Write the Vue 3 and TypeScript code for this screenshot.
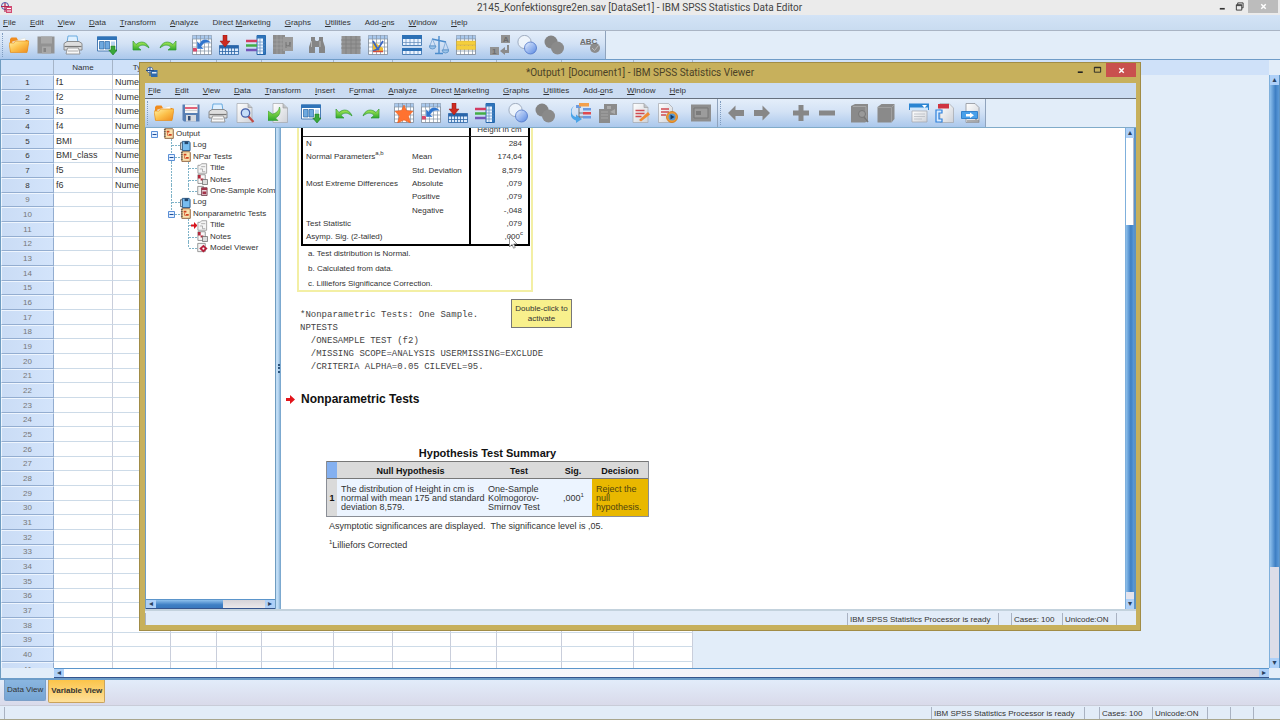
<script setup lang="ts">
interface Menu { text: string; key: number }
interface Glyph { t: string; x: number; y: number }
interface Tool { icon: string; label: string; gap?: 'sep' | 'wide'; off?: boolean; glyphs?: Glyph[] }
interface TreeRow { cells: string[]; icon: string; text: string; current?: boolean }

const menu = (text: string, key = 0): Menu => ({ text, key })

const editorMenus: Menu[] = [
  menu('File'), menu('Edit'), menu('View'), menu('Data'), menu('Transform'), menu('Analyze'),
  menu('Direct Marketing', 7), menu('Graphs'), menu('Utilities'), menu('Add-ons', 4), menu('Window'), menu('Help'),
]
const viewerMenus: Menu[] = [
  menu('File'), menu('Edit'), menu('View'), menu('Data'), menu('Transform'), menu('Insert'), menu('Format', 1),
  menu('Analyze'), menu('Direct Marketing', 7), menu('Graphs'), menu('Utilities'), menu('Add-ons', 4),
  menu('Window'), menu('Help'),
]

const editorTools: Tool[] = [
  { icon: 'open', label: 'Open' },
  { icon: 'save-off', label: 'Save', off: true },
  { icon: 'print', label: 'Print' },
  { icon: 'recall', label: 'Recall dialogs', gap: 'sep' },
  { icon: 'undo', label: 'Undo', gap: 'sep' },
  { icon: 'redo', label: 'Redo' },
  { icon: 'goto-case', label: 'Go to case', gap: 'sep' },
  { icon: 'goto-var', label: 'Go to variable' },
  { icon: 'variables', label: 'Variables' },
  { icon: 'stats-off', label: 'Descriptives', off: true },
  { icon: 'find', label: 'Find', gap: 'sep', off: true },
  { icon: 'grid-off', label: 'Insert case', gap: 'sep', off: true },
  { icon: 'insert-var', label: 'Insert variable' },
  { icon: 'split', label: 'Split file', gap: 'sep' },
  { icon: 'weight', label: 'Weight cases' },
  { icon: 'select', label: 'Select cases' },
  { icon: 'labels-off', label: 'Value labels', gap: 'sep', off: true, glyphs: [{ t: 'A', x: 13, y: 7 }, { t: '1', x: 2, y: 19 }] },
  { icon: 'sets', label: 'Use variable sets' },
  { icon: 'sets-off', label: 'Show all variables', off: true },
  { icon: 'spell', label: 'Spell check', gap: 'wide', off: true, glyphs: [{ t: 'ABC', x: 0, y: 9 }] },
]
const viewerTools: Tool[] = [
  { icon: 'open', label: 'Open' },
  { icon: 'save', label: 'Save' },
  { icon: 'print', label: 'Print' },
  { icon: 'preview', label: 'Print preview' },
  { icon: 'export', label: 'Export', gap: 'sep' },
  { icon: 'recall', label: 'Recall dialogs', gap: 'sep' },
  { icon: 'undo', label: 'Undo', gap: 'sep' },
  { icon: 'redo', label: 'Redo' },
  { icon: 'goto-data', label: 'Go to data', gap: 'sep' },
  { icon: 'goto-case', label: 'Go to case' },
  { icon: 'goto-var', label: 'Go to variable' },
  { icon: 'variables', label: 'Variables' },
  { icon: 'sets', label: 'Use variable sets', gap: 'sep' },
  { icon: 'sets-off', label: 'Show all variables', off: true },
  { icon: 'last-output', label: 'Select last output', gap: 'wide' },
  { icon: 'window-off', label: 'Associate autoscript', off: true },
  { icon: 'script', label: 'Edit script', gap: 'sep' },
  { icon: 'run-script', label: 'Run script' },
  { icon: 'designate-off', label: 'Designate window', gap: 'sep', off: true },
]
const outlineTools: Tool[] = [
  { icon: 'left', label: 'Promote', off: true },
  { icon: 'right', label: 'Demote', off: true },
  { icon: 'plus', label: 'Expand', gap: 'wide', off: true },
  { icon: 'minus', label: 'Collapse', off: true },
  { icon: 'book-open', label: 'Show', gap: 'sep', off: true },
  { icon: 'book', label: 'Hide', off: true },
  { icon: 'heading', label: 'Insert heading', gap: 'sep' },
  { icon: 'title', label: 'Insert title' },
  { icon: 'text', label: 'Insert text' },
]

const variables = ['f1', 'f2', 'f3', 'f4', 'BMI', 'BMI_class', 'f5', 'f6']
const rows = Array.from({ length: 41 }, (_, i) => ({ n: i + 1, name: variables[i] ?? '' }))

const tree: TreeRow[] = [
  { cells: ['box'], icon: 'book-out', text: 'Output' },
  { cells: ['none', 'tee'], icon: 'log', text: 'Log' },
  { cells: ['none', 'boxmid'], icon: 'book-out', text: 'NPar Tests' },
  { cells: ['none', 'line', 'tee'], icon: 'page', text: 'Title' },
  { cells: ['none', 'line', 'tee'], icon: 'notes', text: 'Notes' },
  { cells: ['none', 'line', 'end'], icon: 'pivot', text: 'One-Sample Kolmogorov-Smirnov Test' },
  { cells: ['none', 'tee'], icon: 'log', text: 'Log' },
  { cells: ['none', 'boxend'], icon: 'book-out', text: 'Nonparametric Tests' },
  { cells: ['none', 'none', 'tee'], icon: 'page', text: 'Title', current: true },
  { cells: ['none', 'none', 'tee'], icon: 'notes', text: 'Notes' },
  { cells: ['none', 'none', 'end'], icon: 'model', text: 'Model Viewer' },
]

const pivot = [
  { a: 'N', b: '', v: '284' },
  { a: 'Normal Parameters', sup: 'a,b', b: 'Mean', v: '174,64' },
  { a: '', b: 'Std. Deviation', v: '8,579' },
  { a: 'Most Extreme Differences', b: 'Absolute', v: ',079' },
  { a: '', b: 'Positive', v: ',079' },
  { a: '', b: 'Negative', v: '-,048' },
  { a: 'Test Statistic', b: '', v: ',079' },
  { a: 'Asymp. Sig. (2-tailed)', b: '', v: ',000', vsup: 'c' },
]

const syntax = [
  '*Nonparametric Tests: One Sample.',
  'NPTESTS',
  '  /ONESAMPLE TEST (f2)',
  '  /MISSING SCOPE=ANALYSIS USERMISSING=EXCLUDE',
  '  /CRITERIA ALPHA=0.05 CILEVEL=95.',
]
</script>

<template>
  <div class="desktop">
    <svg class="defs" aria-hidden="true">
      <defs>
        <linearGradient id="g-fold" x1="0" y1="0" x2="1" y2="1">
          <stop offset="0" stop-color="#fff3a8" /><stop offset=".5" stop-color="#fcc04a" /><stop offset="1" stop-color="#ee8a1c" />
        </linearGradient>
        <linearGradient id="g-page" x1="0" y1="0" x2="1" y2="1">
          <stop offset="0" stop-color="#fff" /><stop offset="1" stop-color="#cfd2d8" />
        </linearGradient>
        <linearGradient id="g-blue" x1="0" y1="0" x2="1" y2="1">
          <stop offset="0" stop-color="#e4eeff" /><stop offset="1" stop-color="#4d80e0" />
        </linearGradient>
        <linearGradient id="g-green" x1="0" y1="0" x2="0" y2="1">
          <stop offset="0" stop-color="#b6f05a" /><stop offset="1" stop-color="#2ea82c" />
        </linearGradient>
      </defs>
      <symbol id="i-open" viewBox="0 0 20 20">
        <path d="M1 17V4l1.500-1.500h5L9 5h9.500v11z" fill="#f08c1e" />
        <path d="M3 7l13-4 1 6-12 4z" fill="#fff" stroke="#ddc" stroke-width=".5" />
        <path d="M0 8h5l1.500-2H20l-2 11.500H1.500z" fill="url(#g-fold)" stroke="#e78f1d" stroke-width=".7" />
      </symbol>
      <symbol id="i-save-off" viewBox="0 0 20 20">
        <path d="M1.500 1.500h17v17h-17z" fill="#929292" /><path d="M5 1.500h11v7H5zM6 11.500h9v7H6z" fill="#a8a8a8" /><path d="M7.500 13h2.500v4H7.500z" fill="#858585" />
      </symbol>
      <symbol id="i-save" viewBox="0 0 20 20">
        <path d="M1.500 1.500h17v17H3l-1.500-1.500z" fill="#587fb3" /><path d="M4 1.500h12.500v8.500H4z" fill="#f5f5f5" />
        <path d="M4 4h12.500v2H4z" fill="#e2637a" /><path d="M4 7.500h12.500" stroke="#bbb" stroke-width=".6" />
        <path d="M5 12h10v6.500H5z" fill="#d5d9df" /><path d="M7 13h2.500v4.500H7z" fill="#344d73" />
      </symbol>
      <symbol id="i-print" viewBox="0 0 20 20">
        <path d="M5 1h9l1 7H4z" fill="#dff0ff" stroke="#4d9ad8" stroke-width=".8" />
        <path d="M1 8.500l3-2h12l3 2v6.500H1z" fill="#dedede" stroke="#777" stroke-width=".8" />
        <path d="M1.500 11.500h17" stroke="#777" stroke-width="1.200" />
        <path d="M4.500 13h11l1.500 6H3z" fill="#f8f8f8" stroke="#888" stroke-width=".8" /><path d="M5 16h10" stroke="#999" stroke-width=".8" />
      </symbol>
      <symbol id="i-recall" viewBox="0 0 20 20">
        <path d="M.5 2h19v14H.5z" fill="#fff" stroke="#4a7cb4" /><path d="M0 1.500h20V5H0z" fill="#2f73b8" />
        <path d="M2.500 6.500H7V14H2.500zM8 6.500h4.500V14H8z" fill="#6ea9df" stroke="#2865a5" stroke-width=".7" /><path d="M14 6.500h4v4h-4z" fill="#b8d5f0" />
        <path d="M14 11h4v4h2.200L16 20l-4.200-5H14z" fill="#3aa83a" stroke="#1d7a22" stroke-width=".6" />
      </symbol>
      <symbol id="i-undo" viewBox="0 0 20 20">
        <path d="M2 6v9h8l-3-2.500c3-3.500 7-3 11 .5C16 7 10 5 5 9.500z" fill="url(#g-green)" stroke="#2f9a35" stroke-width=".7" />
      </symbol>
      <symbol id="i-redo" viewBox="0 0 20 20">
        <path d="M18 6v9h-8l3-2.500c-3-3.500-7-3-11 .5C4 7 10 5 15 9.500z" fill="url(#g-green)" stroke="#2f9a35" stroke-width=".7" />
      </symbol>
      <symbol id="i-sheet" viewBox="0 0 20 20">
        <path d="M.5 .5h19v19H.5z" fill="#fff" stroke="#7d8896" stroke-width=".8" /><path d="M.5 .5h19V4H.5z" fill="#a9c8ec" />
        <path d="M0 4h20M0 8h20M0 12h20M0 16h20M4.500 0v20M8.500 0v20M12.500 0v20M16.500 0v20" stroke="#8392a5" stroke-width=".7" />
      </symbol>
      <symbol id="i-goto-case" viewBox="0 0 20 20">
        <use href="#i-sheet" width="20" height="20" /><path d="M1 13h4v3.500H1z" fill="#d9486a" />
        <path d="M5 6v8h7l-2.500-2.300C11 8 14 7 19 8 16 3 10 3 7.500 8.500z" fill="#2f74cc" stroke="#fff" stroke-width=".4" />
      </symbol>
      <symbol id="i-goto-data" viewBox="0 0 20 20">
        <use href="#i-sheet" width="20" height="20" />
        <path d="M10 2l2.500 5.500 6.500.8-4.500 4.700 2 7L10 17l-6.500 3 2-7L1 8.300l6.500-.8z" fill="#ff7230" stroke="#e05a1c" stroke-width=".5" />
      </symbol>
      <symbol id="i-goto-var" viewBox="0 0 20 20">
        <path d="M.5 10.500h19v9H.5z" fill="#dceafb" stroke="#2c66a6" stroke-width=".8" /><path d="M.5 10.500h19v3H.5z" fill="#2865aa" />
        <path d="M0 16.500h20M3.500 13v6.500M6.500 13v6.500M9.500 13v6.500M12.500 13v6.500M15.500 13v6.500" stroke="#2c66a6" stroke-width=".8" />
        <path d="M4 0h4v6h3L6 12 1 6h3z" fill="#cd2b20" stroke="#8d1310" stroke-width=".5" />
      </symbol>
      <symbol id="i-variables" viewBox="0 0 20 20">
        <path d="M11 .5h8.500v19H11z" fill="#eaf3ff" stroke="#2464a8" /><path d="M11 .5h8.500v3H11zM17 1h2.500v18H17z" fill="#2f74ba" />
        <path d="M11 7h8M11 10h8M11 13h8M11 16h8M14 3v16" stroke="#5d8dbe" stroke-width=".7" />
        <path d="M0 6h11" stroke="#d23c62" stroke-width="2.500" /><path d="M0 10.500h11" stroke="#43ad47" stroke-width="2.500" /><path d="M0 15h11" stroke="#7356b8" stroke-width="2.500" />
      </symbol>
      <symbol id="i-stats-off" viewBox="0 0 20 20">
        <path d="M0 0h12v19H0z" fill="#8c8c8c" /><path d="M0 5h12M0 9h12M0 13h12M4 0v19M8 0v19" stroke="#aaa" stroke-width=".6" />
        <path d="M10 2h10v14H10z" fill="#9b9b9b" /><path d="M13 13V7M13 10q4 3 4-3v5" stroke="#747474" fill="none" />
      </symbol>
      <symbol id="i-find" viewBox="0 0 20 20">
        <path d="M4 2h4v3l1 1h2l1-1V2h4v4l2 6v6h-6v-6H8v6H2v-6l2-6z" fill="#858585" /><path d="M4.500 6v6M13 6v6" stroke="#b5b5b5" />
      </symbol>
      <symbol id="i-grid-off" viewBox="0 0 20 20">
        <path d="M.5 1h19v18H.5z" fill="#949494" /><path d="M0 5h20M0 9h20M0 13h20M5 1v18M10 1v18M15 1v18" stroke="#7e7e7e" stroke-width=".8" />
      </symbol>
      <symbol id="i-insert-var" viewBox="0 0 20 20">
        <use href="#i-sheet" width="20" height="20" /><path d="M5 8v9h10v-4l-9-6z" fill="#edbd35" />
        <path d="M5 6l4 7 2 2M15 6l-5 8-5 2" stroke="#3a66c4" stroke-width="1.800" fill="none" /><path d="M5 16.500h10" stroke="#d44b3a" stroke-width="1.500" />
      </symbol>
      <symbol id="i-split" viewBox="0 0 20 20">
        <path d="M.5 .5h19v10H.5zM.5 13.500h19v6H.5z" fill="#eaf3ff" stroke="#2c68a8" stroke-width=".8" /><path d="M0 0h20v4H0zM0 13h20v3H0z" fill="#2c70b5" />
        <path d="M0 7.500h20M4 4v6.500M8 4v6.500M12 4v6.500M16 4v6.500M4 16v4M8 16v4M12 16v4M16 16v4" stroke="#5d87b7" stroke-width=".7" />
      </symbol>
      <symbol id="i-weight" viewBox="0 0 20 20">
        <path d="M10 1v17M3 4l14 3M6 18.500h8" stroke="#4b8ccc" stroke-width="1.400" fill="none" />
        <path d="M3.500 4L.8 11h5.600zM16.500 7L14 15h5.500z" fill="none" stroke="#6a9bd0" stroke-width=".7" />
        <path d="M0 11h7q-.5 3-3.500 3T0 11zM13 15h7q-.5 3-3.500 3T13 15z" fill="#9cc4ea" stroke="#4c86bf" stroke-width=".7" />
      </symbol>
      <symbol id="i-select" viewBox="0 0 20 20">
        <use href="#i-sheet" width="20" height="20" /><path d="M.5 6h19v4H.5zM.5 10.500h19v4H.5z" fill="#f5cf3c" stroke="#d5aa2c" stroke-width=".5" />
      </symbol>
      <symbol id="i-labels-off" viewBox="0 0 20 20">
        <path d="M11 0h9v8h-9zM0 12h9v8H0z" fill="#929292" /><path d="M10 16l5-4v3h2v-5h2v8h-4v2z" fill="#8b8b8b" />
      </symbol>
      <symbol id="i-sets" viewBox="0 0 20 20">
        <circle cx="7.500" cy="7" r="6.600" fill="#f3f7fd" fill-opacity=".8" stroke="#8f9db2" stroke-width=".8" />
        <circle cx="13.500" cy="13" r="6" fill="url(#g-blue)" fill-opacity=".9" stroke="#4d74c8" stroke-width=".8" />
      </symbol>
      <symbol id="i-sets-off" viewBox="0 0 20 20"><circle cx="7" cy="7" r="6.500" fill="#848484" /><circle cx="13.500" cy="13" r="6.500" fill="#8a8a8a" /></symbol>
      <symbol id="i-spell" viewBox="0 0 20 20">
        <path d="M0 9.500h18" stroke="#999" /><circle cx="15" cy="13" r="5" fill="#8c8c8c" /><path d="M12 13l2.500 2.500 4-5" stroke="#bbb" fill="none" />
      </symbol>
      <symbol id="i-doc" viewBox="0 0 20 20"><path d="M2 .5h11l4 4v15H2z" fill="url(#g-page)" stroke="#a3a6ac" stroke-width=".7" /><path d="M13 .5v4h4" fill="#bfc3c8" stroke="#999" stroke-width=".6" /></symbol>
      <symbol id="i-preview" viewBox="0 0 20 20">
        <use href="#i-doc" width="20" height="20" /><path d="M13 13l5.500 6" stroke="#c04b45" stroke-width="2.200" /><circle cx="10.500" cy="10" r="4.200" fill="#c5ddf8" stroke="#465fa8" stroke-width="1.300" />
      </symbol>
      <symbol id="i-export" viewBox="0 0 20 20">
        <path d="M5 .5h10l4.500 4.500v14.500H5z" fill="url(#g-page)" stroke="#a3a6ac" stroke-width=".7" /><path d="M15 .5V5h4.500" fill="#bfc3c8" stroke="#999" stroke-width=".6" />
        <path d="M0 8v9.500h10L7.500 15c4-2 5.500-6 4-11-.5 4-3.500 6.500-7 7z" fill="url(#g-green)" stroke="#35983a" stroke-width=".6" />
      </symbol>
      <symbol id="i-last-output" viewBox="0 0 20 20">
        <path d="M5 2h5v3H5zM12 5h8v2.500h-8zM12 13h8v2.500h-8z" fill="#6b9be0" /><path d="M8 0h10v3.500H8z" fill="#f3a04c" /><path d="M12 9h8v2.500h-8z" fill="#e0494f" />
        <path d="M3 3C-1 7 0 13 5 14v-2.500l6 4.500-6 4v-2.500C-2 16-2 6 3 3z" fill="#4ba4e8" /><path d="M8 5v9h4M8 10h4" stroke="#555" stroke-width=".8" fill="none" />
      </symbol>
      <symbol id="i-window-off" viewBox="0 0 20 20">
        <path d="M6 1h13v11H6zM1 6h11v14H1z" fill="#8b8b8b" /><path d="M3 9h7M3 12h7M3 15h7" stroke="#a6a6a6" /><path d="M9 3h4v3H9zM12 9l5-3v5z" fill="#aaa" />
      </symbol>
      <symbol id="i-script" viewBox="0 0 20 20">
        <use href="#i-doc" width="20" height="20" /><path d="M4.500 7.500h9M4.500 10.500h9M4.500 13.500h6" stroke="#d14b50" stroke-width="1.400" /><path d="M8 17l9-8 2 2.500-9 7z" fill="#f08a32" />
      </symbol>
      <symbol id="i-run-script" viewBox="0 0 20 20">
        <path d="M.5 .5h10l4 4v15H.5z" fill="url(#g-page)" stroke="#a3a6ac" stroke-width=".7" /><path d="M3 6h8M3 9h8M3 12h5" stroke="#d14b50" stroke-width="1.300" /><circle cx="14" cy="14" r="5.500" fill="#f29a30" stroke="#c87518" stroke-width=".8" /><circle cx="14" cy="14" r="3.500" fill="#5797cf" /><path d="M12.500 11.500l4 2.500-4 2.500z" fill="#143b66" />
      </symbol>
      <symbol id="i-designate-off" viewBox="0 0 20 20">
        <path d="M0 1.500h20v17H0z" fill="#8e8e8e" /><path d="M3 5h14v10H3z" fill="#9c9c9c" stroke="#777" /><path d="M5 8h5v4H5z" fill="#7b7b7b" />
      </symbol>
      <symbol id="i-left" viewBox="0 0 20 20"><path d="M2 10l7.500-7.500V7H18v6H9.500v4.500z" fill="#878787" /></symbol>
      <symbol id="i-right" viewBox="0 0 20 20"><path d="M18 10l-7.500-7.500V7H2v6h8.500v4.500z" fill="#878787" /></symbol>
      <symbol id="i-plus" viewBox="0 0 20 20"><path d="M7.500 2h5v5.500H18v5h-5.500V18h-5v-5.500H2v-5h5.500z" fill="#878787" /></symbol>
      <symbol id="i-minus" viewBox="0 0 20 20"><path d="M2 7.500h16v5H2z" fill="#878787" /></symbol>
      <symbol id="i-book-open" viewBox="0 0 20 20">
        <path d="M1 3l4-2h13v17l-3 1.500H1z" fill="#8a8a8a" /><path d="M3 3.500h13v14" stroke="#a6a6a6" fill="none" /><circle cx="12" cy="11" r="3.500" fill="#999" stroke="#777" /><path d="M14 14l4 5" stroke="#777" stroke-width="1.500" />
      </symbol>
      <symbol id="i-book" viewBox="0 0 20 20"><path d="M1.500 4l4-3h13v15l-3 3.500h-14z" fill="#8a8a8a" /><path d="M2 4.500h13.500L18 2M15.500 5v14" stroke="#a6a6a6" stroke-width=".8" fill="none" /></symbol>
      <symbol id="i-heading" viewBox="0 0 20 20">
        <path d="M3 8h15v11H3z" fill="url(#g-page)" stroke="#a0a5ad" stroke-width=".7" /><path d="M5 11h11M5 13.500h11M5 16h8" stroke="#b7bbc2" stroke-width=".8" />
        <path d="M0 .5h20V7H0z" fill="#2a85d2" /><path d="M1 4.500h18V7H1z" fill="#cfe7fb" /><path d="M13 2h5l-2.500 3z" fill="#fff" />
      </symbol>
      <symbol id="i-title" viewBox="0 0 20 20">
        <path d="M5 .5h9l4.500 4.500v14.500H5z" fill="url(#g-page)" stroke="#a3a6ac" stroke-width=".7" /><path d="M3 1h11v4.500H3z" fill="#cf3441" /><path d="M1 7h6v3H4v6h3v3H1z" fill="#d8ebff" stroke="#2d80dc" stroke-width="1.200" />
      </symbol>
      <symbol id="i-text" viewBox="0 0 20 20">
        <path d="M5 .5h9l4 4v15H5z" fill="url(#g-page)" stroke="#8f939a" stroke-width=".8" /><path d="M6 18h12M15 9v8" stroke="#777" />
        <path d="M.5 8.500h16v7H.5z" fill="#48a0ea" stroke="#1d72c4" stroke-width=".8" /><path d="M5 11h4V9.500l4 2.700-4 2.800v-1.500H5z" fill="#fff" />
      </symbol>
      <symbol id="i-app" viewBox="0 0 12 12">
        <circle cx="4" cy="4" r="3.500" fill="none" stroke="#4a4fa5" /><path d="M5 4h6v7H5z" fill="#d14a72" /><path d="M0 4.500h8M4 1v9" stroke="#b5224e" stroke-width="1.200" /><path d="M6 6h4v1H6zM6 8.500h4v1H6z" fill="#fff" />
      </symbol>
      <symbol id="i-app2" viewBox="0 0 12 12">
        <circle cx="4" cy="4" r="3" fill="#dfeaf5" stroke="#6a7f9b" /><path d="M5 4h6.500v7H5z" fill="#2f69ac" /><path d="M0 4.500h8M4 1v9" stroke="#234d88" /><path d="M6 6h4.500v1.500H6z" fill="#dfeaf8" />
      </symbol>
      <symbol id="i-book-out" viewBox="0 0 12 12">
        <path d="M2 .8h8.500l.7 1v9.500H2z" fill="#fbe3b0" stroke="#7d4a22" stroke-width=".9" /><path d="M1 1.500h2M1 4h2M1 6.500h2M1 9h2" stroke="#444" stroke-width=".9" /><path d="M4 3h3v2H4zM6.500 6.500h3v2h-3z" fill="#cf4320" /><path d="M5 5v3h1.500" stroke="#cf4320" fill="none" stroke-width=".8" />
      </symbol>
      <symbol id="i-log" viewBox="0 0 12 12">
        <path d="M.5 3h2.500v7.500H.5z" fill="#eee" stroke="#444" stroke-width=".8" /><path d="M2.500 1.500H10l1 1.500v8.500H2.500z" fill="#78bdf0" stroke="#1a4674" stroke-width=".9" /><path d="M5 1.500h4v3H5z" fill="#24466c" />
      </symbol>
      <symbol id="i-page" viewBox="0 0 12 12">
        <path d="M1 2.500h2.500L5 .8h5.500v10.400H1z" fill="#f4f4f4" stroke="#888" stroke-width=".8" /><path d="M4.500 4h4.500M3 6.500h3M6 6.500v3h3" stroke="#999" stroke-width=".8" fill="none" />
      </symbol>
      <symbol id="i-notes" viewBox="0 0 12 12">
        <path d="M1 .8h8v9.500H1z" fill="#f8f8f8" stroke="#777" stroke-width=".8" /><path d="M1 1h3v4H1zM4 5h3v2H4z" fill="#b4283a" /><path d="M6 6h5.500v5.500H6z" fill="#ddd" stroke="#666" stroke-width=".8" />
      </symbol>
      <symbol id="i-pivot" viewBox="0 0 12 12">
        <path d="M.8 1.500H7v9H.8z" fill="#f4f4f4" stroke="#777" stroke-width=".8" /><path d="M5 3h6v8.500H5z" fill="#e8d9dc" stroke="#5c2233" stroke-width=".8" /><path d="M5 3h6v2.500H5zM6 7h4v3H6z" fill="#a33349" />
      </symbol>
      <symbol id="i-model" viewBox="0 0 12 12">
        <path d="M.8 1.500H9v9H.8z" fill="#f4f4f4" stroke="#777" stroke-width=".8" /><path d="M7 3l4.500 4.200L7 11.500 2.500 7.200z" fill="#b51f3a" /><circle cx="7" cy="7.200" r="1.200" fill="#fff" />
      </symbol>
    </svg>

    <header class="titlebar">
      <svg class="app-icon"><use href="#i-app" /></svg>
      <h1 class="caption">2145_Konfektionsgre2en.sav [DataSet1] - IBM SPSS Statistics Data Editor</h1>
      <div class="controls">
        <button aria-label="Minimize"><svg viewBox="0 0 10 10"><path d="M2 7.500h5.500" stroke="#333" stroke-width="1.800" /></svg></button>
        <button aria-label="Restore"><svg viewBox="0 0 10 10"><path d="M3 3V1h6v5.500H7.500M1.500 3h6v6h-6zM1.500 4h6" fill="none" stroke="#333" /></svg></button>
        <button class="close idle" aria-label="Close"><svg viewBox="0 0 10 10"><path d="M2.500 2.500l5 5m0-5l-5 5" stroke="#fff" stroke-width="1.600" /></svg></button>
      </div>
    </header>
    <nav class="menubar editor-menu">
      <button v-for="m in editorMenus" :key="m.text">{{ m.text.slice(0, m.key) }}<u>{{ m.text[m.key] }}</u>{{ m.text.slice(m.key + 1) }}</button>
    </nav>
    <div class="toolrow">
      <div class="toolbar main-tools" role="toolbar">
        <button v-for="t in editorTools" :key="t.label" :class="t.gap" :aria-label="t.label" :disabled="t.off">
          <svg class="icon" viewBox="0 0 20 20">
            <use :href="'#i-' + t.icon" width="20" height="20" />
            <text v-for="g in t.glyphs" :key="g.t" :x="g.x" :y="g.y">{{ g.t }}</text>
          </svg>
        </button>
      </div>
    </div>

    <main class="sheet">
      <div class="sheet-body">
        <div class="grid-clip">
          <table class="grid">
            <colgroup>
              <col class="c-num"><col class="c-59"><col class="c-58"><col class="c-46"><col class="c-45"><col class="c-72"><col class="c-59">
              <col class="c-58"><col class="c-46"><col class="c-65"><col class="c-72"><col class="c-59">
            </colgroup>
            <thead>
              <tr><th></th><th scope="col">Name</th><th scope="col">Type</th><th v-for="i in 9" :key="i"></th></tr>
            </thead>
            <tbody>
              <tr v-for="r in rows" :key="r.n">
                <th scope="row" :class="{ used: r.name }">{{ r.n }}</th>
                <td>{{ r.name }}</td>
                <td>{{ r.name ? 'Numeric' : '' }}</td>
                <td v-for="i in 9" :key="i"></td>
              </tr>
            </tbody>
          </table>
        </div>
        <div class="vscroll outer-v">
          <button aria-label="Scroll up">▴</button><i class="thumb"></i><i class="track"></i><button aria-label="Scroll down">▾</button>
        </div>
      </div>
      <div class="hscroll outer-h">
        <button aria-label="Scroll left">◂</button><i class="track"></i><button aria-label="Scroll right">▸</button>
      </div>
    </main>
    <div class="tabs" role="tablist">
      <button class="tab" role="tab">Data View</button>
      <button class="tab active" role="tab" aria-selected="true">Variable View</button>
    </div>
    <footer class="status editor-status">
      <span class="fill"></span><span class="msg">IBM SPSS Statistics Processor is ready</span><span class="gapcell"></span>
      <span class="cases">Cases: 100</span><span class="uni">Unicode:ON</span><span class="small"></span><span class="small"></span><span class="small"></span>
    </footer>

    <section class="viewer">
      <header class="viewer-title">
        <svg class="app-icon"><use href="#i-app2" /></svg>
        <h2 class="caption">*Output1 [Document1] - IBM SPSS Statistics Viewer</h2>
        <div class="controls">
          <button aria-label="Minimize"><svg viewBox="0 0 10 10"><path d="M2 8h5.500" stroke="#222" stroke-width="1.800" /></svg></button>
          <button aria-label="Maximize"><svg viewBox="0 0 10 10"><path d="M1.500 2.500h7v5.500h-7zM1.500 3h7" fill="none" stroke="#222" /></svg></button>
          <button class="close" aria-label="Close"><svg viewBox="0 0 10 10"><path d="M2.500 2.500l5 5m0-5l-5 5" stroke="#fff" stroke-width="1.600" /></svg></button>
        </div>
      </header>
      <nav class="menubar viewer-menu">
        <button v-for="m in viewerMenus" :key="m.text">{{ m.text.slice(0, m.key) }}<u>{{ m.text[m.key] }}</u>{{ m.text.slice(m.key + 1) }}</button>
      </nav>
      <div class="toolrow viewer-toolrow">
        <div class="toolbar view-tools" role="toolbar">
          <button v-for="t in viewerTools" :key="t.label" :class="t.gap" :aria-label="t.label" :disabled="t.off">
            <svg class="icon"><use :href="'#i-' + t.icon" /></svg>
          </button>
        </div>
        <div class="toolbar outline-tools" role="toolbar">
          <button v-for="t in outlineTools" :key="t.label" :class="t.gap" :aria-label="t.label" :disabled="t.off">
            <svg class="icon"><use :href="'#i-' + t.icon" /></svg>
          </button>
        </div>
      </div>

      <div class="panes">
        <aside class="outline">
          <ul class="tree">
            <li v-for="(r, i) in tree" :key="i">
              <svg v-for="(c, j) in r.cells" :key="j" class="cell" viewBox="0 0 17 12">
                <path v-if="c === 'line' || c === 'tee' || c === 'boxmid'" d="M8.500 0v12" class="dash" />
                <path v-if="c === 'end' || c === 'boxend'" d="M8.500 0v6" class="dash" />
                <path v-if="c !== 'none' && c !== 'line' && c !== 'box'" d="M9 6.500h8" class="dash" />
                <g v-if="c.startsWith('box')">
                  <path d="M5.500 3.500h6v6h-6z" fill="#e3efff" stroke="#5a8fd6" /><path d="M6.500 6.500h4" stroke="#1d4f9c" />
                </g>
                <path v-if="r.current && j === 2" d="M11 5.500h3V3l3.500 3.500L14 10V7.500h-3z" fill="#d8141c" />
              </svg>
              <svg class="node"><use :href="'#i-' + r.icon" /></svg>
              <span>{{ r.text }}</span>
            </li>
          </ul>
          <div class="hscroll tree-h">
            <button aria-label="Scroll left">◂</button><i class="thumb"></i><i class="track"></i><button aria-label="Scroll right">▸</button>
          </div>
        </aside>
        <div class="splitter"><i></i></div>
        <div class="document">
          <article class="content">
            <div class="pivot-box">
              <table class="pivot">
                <colgroup><col class="p-col-a"><col class="p-col-b"><col class="p-col-v"></colgroup>
                <thead><tr><th colspan="2"></th><th>Height in cm</th></tr></thead>
                <tbody>
                  <tr v-for="(p, i) in pivot" :key="i">
                    <td class="p-a">{{ p.a }}<sup v-if="p.sup">{{ p.sup }}</sup></td>
                    <td>{{ p.b }}</td>
                    <td class="p-v">{{ p.v }}<sup v-if="p.vsup">{{ p.vsup }}</sup>
                      <svg v-if="p.vsup" class="cursor" viewBox="0 0 9 13"><path d="M.5 .5v10.500l2.500-2.500 1.600 3.700 1.700-.8L4.700 8h3.300z" fill="#fff" stroke="#777" stroke-width=".8" /></svg>
                    </td>
                  </tr>
                </tbody>
              </table>
              <p>a. Test distribution is Normal.</p>
              <p>b. Calculated from data.</p>
              <p>c. Lilliefors Significance Correction.</p>
            </div>
            <div class="syntax">
              <pre v-for="line in syntax" :key="line">{{ line }}</pre>
            </div>
            <h3 class="section">
              <svg viewBox="0 0 9 9"><path d="M0 3h4V0l5 4.500L4 9V6H0z" fill="#e2141b" /></svg>Nonparametric Tests
            </h3>
            <div class="summary">
              <table>
                <caption>Hypothesis Test Summary</caption>
                <colgroup><col class="h-n"><col class="h-null"><col class="h-test"><col class="h-sig"><col class="h-dec"></colgroup>
                <thead>
                  <tr><th class="corner"></th><th>Null Hypothesis</th><th>Test</th><th>Sig.</th><th>Decision</th></tr>
                </thead>
                <tbody>
                  <tr>
                    <th scope="row">1</th>
                    <td>The distribution of Height in cm is<br>normal with mean 175 and standard<br>deviation 8,579.</td>
                    <td>One-Sample<br>Kolmogorov-<br>Smirnov Test</td>
                    <td class="sig">,000<sup>1</sup></td>
                    <td class="reject">Reject the<br>null<br>hypothesis.</td>
                  </tr>
                </tbody>
              </table>
              <p>Asymptotic significances are displayed.&nbsp; The significance level is ,05.</p>
              <p><sup>1</sup>Lilliefors Corrected</p>
            </div>
            <div class="tooltip" role="tooltip">Double-click to<br>activate</div>
          </article>
          <div class="vscroll inner-v">
            <button aria-label="Scroll up">▴</button><i class="track"></i><i class="thumb"></i><i class="rest"></i><button aria-label="Scroll down">▾</button>
          </div>
        </div>
      </div>
      <footer class="status viewer-status">
        <span class="fill"></span><span class="msg">IBM SPSS Statistics Processor is ready</span><span class="gapcell"></span>
        <span class="cases">Cases: 100</span><span class="uni">Unicode:ON</span><span class="small"></span>
      </footer>
    </section>
  </div>
</template>

<style>
html, body { margin: 0; background: #e2edf9; }
</style>

<style scoped>
.desktop {
  position: relative; display: flex; flex-direction: column; height: 100vh; overflow: hidden;
  font: 8px/10px "Liberation Sans", Arial, sans-serif; color: #333; background: #e2edf9;
}
.desktop *, .desktop *::before { box-sizing: border-box; }
.defs { position: absolute; width: 0; height: 0; }
button { margin: 0; padding: 0; border: 0; background: none; font: inherit; color: inherit; }
h1, h2, h3, p, ul, pre { margin: 0; padding: 0; font-weight: 400; }
table { border-collapse: separate; border-spacing: 0; table-layout: fixed; }
th, td { padding: 0; text-align: left; }
sup { font-size: 6px; line-height: 0; vertical-align: 4px; }

.titlebar { display: flex; flex: none; height: 15px; background: #ebebeb; }
.app-icon { width: 12px; height: 12px; margin: 2px 0 0 1px; flex: none; }
.caption { flex: 1; text-align: center; font: 10px/16px Roboto, "Noto Sans", sans-serif; color: #444; white-space: nowrap; }
.controls { display: flex; flex: none; }
.controls button { width: 17px; height: 13px; display: grid; place-items: center; }
.controls svg { width: 9px; height: 9px; }
.controls .close { width: 30px; background: #c9504e; }
.controls .idle { background: #bcbcbc; margin-right: 2px; }
.titlebar .caption { padding-left: 52px; }

.menubar { display: flex; flex: none; gap: 14px; height: 16px; padding: 0 3px; align-items: center; background: linear-gradient(#d3e3f6, #c9dcf0); border-bottom: 1px solid #a9b4c4; }
.menubar u { text-underline-offset: 1px; }
.editor-menu { padding-top: 1px; }

.toolrow { display: flex; flex: none; height: 29px; border-bottom: 1px solid #6f9cc8; background: #e2edf9; }
.toolbar { display: flex; align-items: center; background: linear-gradient(#e4eefa, #d3e2f5 45%, #abc8ec); border-right: 1px solid #8fa3bd; padding: 0 5px; position: relative; }
.toolbar::before { content: ""; position: absolute; left: 2px; top: 2px; bottom: 2px; border-left: 1px dotted #7f9cc0; }
.toolbar button { width: 27px; height: 22px; display: grid; place-items: center; }
.icon { width: 20px; height: 20px; }
.icon text { font-size: 8px; font-weight: 700; fill: #6c6c6c; }
.main-tools { padding: 0 2px 0 5px; }
.sep { margin-left: 7px; }
.wide { margin-left: 9px; }

.sheet { flex: 1; min-height: 0; display: flex; flex-direction: column; border-left: 1px solid #6f9cc0; border-bottom: 2px solid #6c9cc8; }
.sheet-body { flex: 1; min-height: 0; display: flex; }
.grid-clip { flex: 1; min-height: 0; overflow: hidden; background: linear-gradient(#cfe1f9, #cfe1f9) 0 0 / 100% 15px no-repeat; }
.grid { width: 692px; font-size: 9px; }
.grid th { height: 15px; line-height: 13px; font-size: 8px; font-weight: 400; text-align: center; background: #cfe1f9; border-right: 1px solid #a5b4c8; border-bottom: 1px solid #a5b9d2; }
.grid tbody th { color: #777; line-height: 12px; height: 15px; border: 1px solid #93add0; border-top-color: #eef5fe; border-left-color: #eef5fe; background: linear-gradient(90deg, #cadcf5, #d3e4fb); }
.grid tbody th.used { color: #333; }
.grid td { height: 15px; line-height: 13px; padding-left: 2px; overflow: hidden; white-space: nowrap; background: #fff; border-right: 1px solid #c9cedb; border-bottom: 1px solid #cddbe8; }
.grid tbody tr:nth-child(3n) th, .grid tbody tr:nth-child(3n) td { height: 14px; }
.c-num { width: 53px; } .c-59 { width: 59px; } .c-58 { width: 58px; } .c-46 { width: 46px; } .c-45 { width: 45px; } .c-72 { width: 72px; } .c-65 { width: 65px; }

.vscroll, .hscroll { display: flex; flex: none; }
.vscroll { flex-direction: column; width: 10px; border-left: 1px solid #7fb0dc; border-right: 1px solid #5d93c4; }
.vscroll button { height: 10px; flex: none; }
.hscroll { height: 10px; border-top: 1px solid #5b95cb; border-bottom: 1px solid #34548c; }
.hscroll button { width: 10px; flex: none; }
.vscroll button, .hscroll button { display: grid; place-items: center; overflow: hidden; background: #aed0f8; color: #29415f; font: 8px/8px "DejaVu Sans", sans-serif; }
.vscroll .thumb { background: linear-gradient(90deg, #8ec0ec, #3e7fc4 60%, #5b9ad8); }
.hscroll .thumb { background: linear-gradient(#8ec0ec, #3e7fc4 60%, #3978bd); }
.outer-v { width: 11px; margin-top: 15px; }
.outer-v .thumb { flex: 482; }
.outer-v .track { flex: 91; background: #dcdde8; }
.outer-h { margin: 0 11px 0 53px; }
.outer-h .track { flex: 1; background: linear-gradient(90deg, #fff, #f4f4fa 50%, #d7d8e4); }

.tabs { flex: none; display: flex; align-items: flex-start; gap: 2px; height: 25px; padding-left: 4px; background: linear-gradient(#e2ecfa, #d9daea); }
.tab { height: 21px; padding: 0 2px; background: linear-gradient(#8ab6e0, #76a5d4); border: 1px solid #7b9fc8; border-top: 0; border-radius: 0 0 2px 2px; white-space: nowrap; }
.tab.active { height: 23px; font-weight: 700; background: linear-gradient(#fbc44a, #fee09a); border-color: #c9a35c; }

.status { display: flex; flex: none; background: #e2ecf8; }
.status span { flex: none; border-left: 1px solid #a9b2c2; padding-left: 2px; white-space: nowrap; line-height: 13px; }
.status .fill { flex: 1; }
.editor-status { height: 15px; margin: 0; padding: 1px 4px 0; border-top: 1px solid #c9ccd8; border-bottom: 1px solid #a8a68e; }
.editor-status .msg { width: 153px; } .editor-status .gapcell { width: 15px; } .editor-status .cases { width: 53px; }
.editor-status .uni { width: 55px; } .editor-status .small { width: 23px; }

.viewer { position: absolute; left: 139px; right: 139px; top: 62px; bottom: 89px; display: flex; flex-direction: column; padding: 0 4px 5px 5px; background: #c7b05c; border: 1px solid #a18c46; }
.viewer-title { display: flex; flex: none; height: 20px; }
.viewer-title .app-icon { margin-top: 3px; }
.viewer-title .caption { line-height: 20px; padding-left: 50px; color: #4b4227; }
.viewer-title .close { height: 14px; }
.viewer-menu { background: #cbdcf2; border-bottom-color: #66707e; }
.viewer-toolrow { height: 29px; border-bottom-color: #80abc9; }
.view-tools { padding: 0 3px 0 5px; }
.view-tools .sep { margin-left: 6px; }
.outline-tools button { width: 26px; }
.outline-tools .wide { margin-left: 13px; }
.outline-tools { padding: 0 1px 0 5px; }

.panes { flex: 1; min-height: 0; display: flex; background: #fff; }
.outline { width: 131px; flex: none; display: flex; flex-direction: column; overflow: hidden; border-right: 1px solid #6f9cc0; border-left: 1px solid #6f9cc0; }
.tree { flex: 1; min-height: 0; list-style: none; overflow: hidden; }
.tree li { display: flex; align-items: center; height: 11px; white-space: nowrap; }
.tree li:nth-child(5n + 2), .tree li:nth-child(5n + 4) { height: 12px; }
.cell { width: 17px; height: 12px; flex: none; }
.dash { stroke: #7fb3c8; stroke-dasharray: 2 1; fill: none; }
.node { width: 11px; height: 11px; margin-right: 2px; flex: none; }
.tree-h .thumb { flex: 67; } .tree-h .track { flex: 42; background: linear-gradient(#d5d3d8, #ebe8ea); }
.splitter { width: 5px; flex: none; display: grid; place-items: center; background: linear-gradient(90deg, #bfdcf5 40%, #6f9fc8); }
.splitter i { width: 2px; height: 9px; border-left: 2px dotted #2b547c; }
.document { position: relative; flex: 1; min-width: 0; display: flex; overflow: hidden; }
.content { position: relative; flex: 1; min-width: 0; padding-left: 16px; }
.inner-v { width: 11px; border-right-width: 2px; }
.inner-v .track { flex: 88; background: #fff; border-right: 1px solid #b5b8c8; }
.inner-v .thumb { flex: 373; } .inner-v .rest { flex: 7; background: #e4e4ee; }

.pivot-box { width: 236px; height: 172px; margin-top: -8px; padding: 0 2px; border: 2px solid #f3efa4; }
.pivot { width: 229px; border: 2px solid #000; border-top: 0; }
.pivot thead th { height: 15px; line-height: 13px; text-align: center; font-weight: 400; border-bottom: 1px solid #333; }
.pivot td { height: 13px; line-height: 12px; white-space: nowrap; }
.pivot tbody tr:nth-child(3n + 2) td { height: 14px; }
.p-col-a { width: 109px; } .p-col-b { width: 57px; } .p-col-v { width: 59px; }
.p-a { padding-left: 3px; }
.pivot th:last-child, .pivot .p-v { border-left: 2px solid #000; }
.p-v { position: relative; text-align: right; padding-right: 6px; }
.p-v sup { margin-right: -1px; }
.cursor { position: absolute; left: 38px; top: 6px; width: 9px; height: 13px; }
.pivot-box p { padding-left: 7px; line-height: 15px; }

.syntax { margin: 17px 0 0 3px; color: #444; }
.syntax pre { width: fit-content; font: 9px/13px "Liberation Mono", "Courier New", monospace; }
.section { display: flex; align-items: center; margin: 18px 0 0 -11px; font-size: 12px; line-height: 14px; font-weight: 700; color: #111; }
.section svg { width: 9px; height: 9px; margin-right: 6px; }
.summary { margin: 40px 0 0 29px; font-size: 9px; }
.summary caption { font-size: 11px; font-weight: 700; line-height: 14px; padding-bottom: 1px; color: #111; }
.summary table { width: 323px; border-right: 1px solid #8a8e96; border-bottom: 1px solid #8a8e96; border-left: 1px solid #8a8e96; }
.summary thead th { height: 18px; line-height: 14px; padding-top: 1px; text-align: center; background: #dadada; color: #111; border-top: 1px solid #777; border-bottom: 1px solid #777; }
.summary thead .corner { background: #84b0f0; }
.summary tbody th { background: #dadada; text-align: center; color: #111; }
.summary td { height: 37px; padding: 2px 0 0 4px; line-height: 9px; background: #ecf4ff; white-space: nowrap; }
.summary .reject { background: #e9b800; color: #4f4310; }
.summary .sig { padding-left: 9px; }
.h-n { width: 10px; } .h-null { width: 147px; } .h-test { width: 70px; } .h-sig { width: 38px; } .h-dec { width: 56px; }
.summary p { margin: 4px 0 8px 3px; line-height: 11px; }
.tooltip { position: absolute; left: 230px; top: 171px; width: 61px; padding: 4px 0 3px; text-align: center; background: #f8f08c; border: 1px solid #777; line-height: 10px; }

.viewer-status { height: 16px; padding-top: 2px; border-top: 2px solid #c3d2dd; }
.viewer-status .msg { width: 151px; } .viewer-status .gapcell { width: 13px; } .viewer-status .cases { width: 51px; }
.viewer-status .uni { width: 54px; } .viewer-status .small { width: 20px; }
</style>
